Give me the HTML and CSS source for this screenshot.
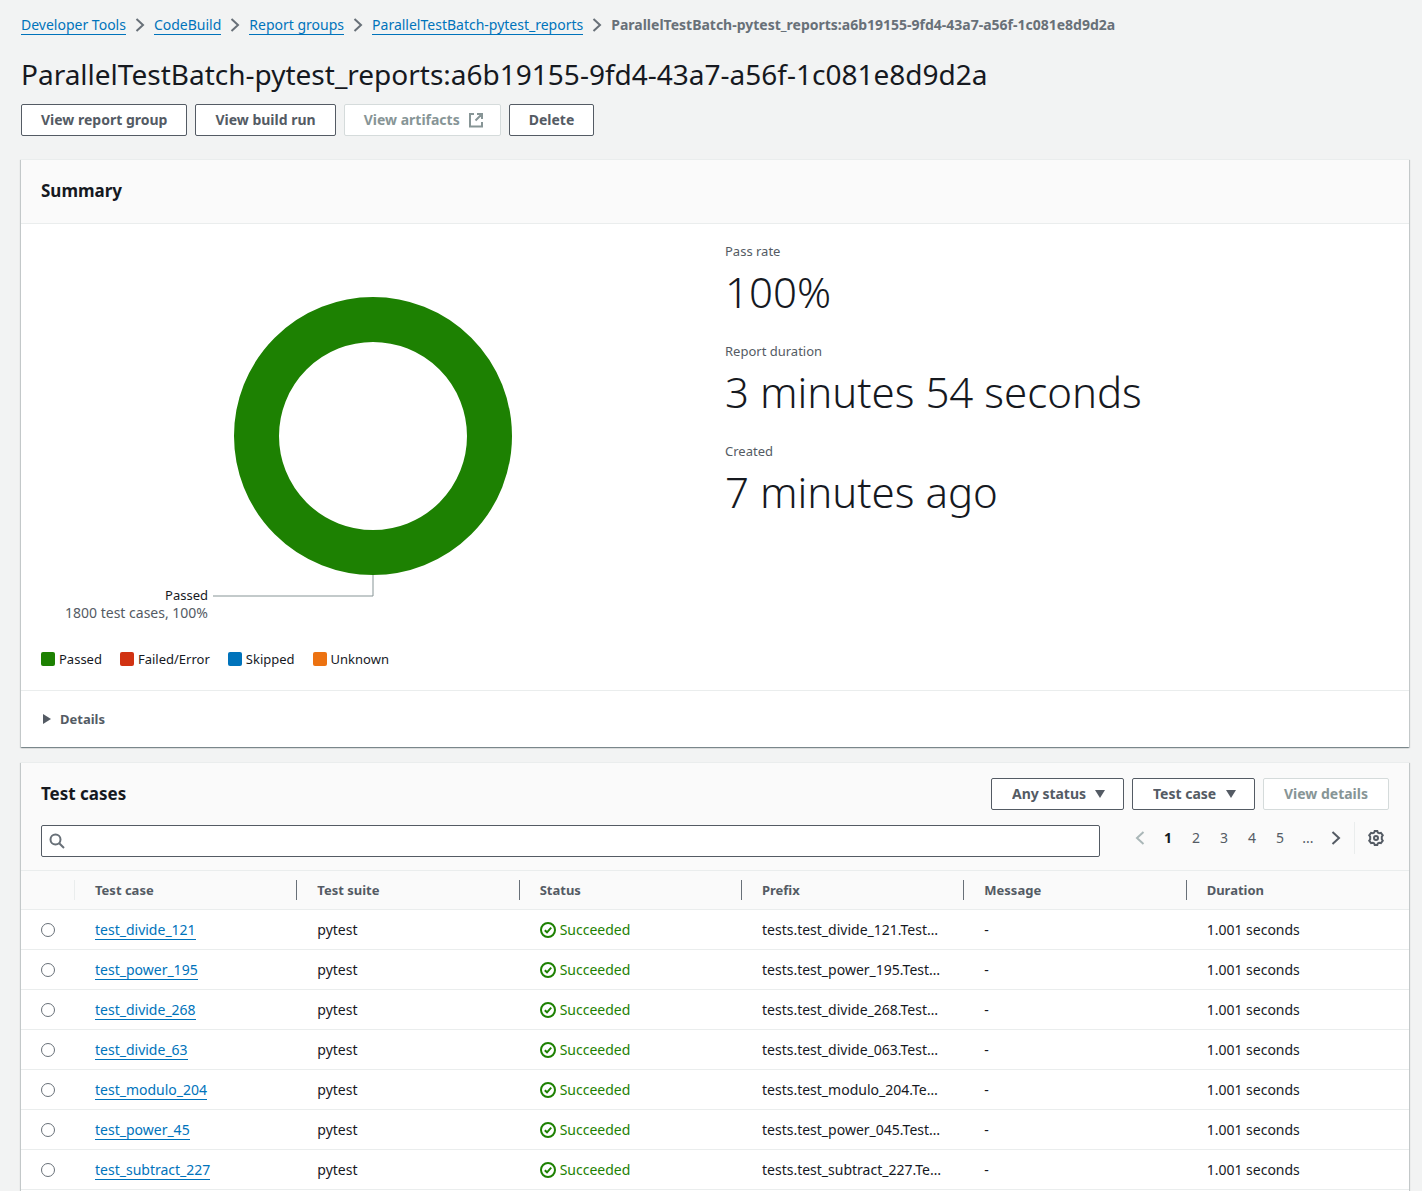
FILE: index.html
```html
<!DOCTYPE html>
<html lang="en">
<head>
<meta charset="utf-8">
<title>ParallelTestBatch-pytest_reports - CodeBuild</title>
<link rel="stylesheet" href="styles.css">
</head>
<body>
<svg class="sprite" aria-hidden="true">
  <symbol id="chevron" viewBox="0 0 16 16"><path d="M4.500 2l6.500 6-6.500 6"/></symbol>
  <symbol id="caret" viewBox="0 0 16 16"><path d="M3 4h10L8 12z"/></symbol>
  <symbol id="check" viewBox="0 0 16 16"><circle cx="8" cy="8" r="7"/><path d="M4.800 8.200l2.200 2.100 4.200-4.600"/></symbol>
</svg>
<main class="page">
  <nav class="breadcrumb" aria-label="Breadcrumb">
    <a href="#">Developer Tools</a>
    <svg class="icon"><use href="#chevron"/></svg>
    <a href="#">CodeBuild</a>
    <svg class="icon"><use href="#chevron"/></svg>
    <a href="#">Report groups</a>
    <svg class="icon"><use href="#chevron"/></svg>
    <a href="#">ParallelTestBatch-pytest_reports</a>
    <svg class="icon"><use href="#chevron"/></svg>
    <span class="current">ParallelTestBatch-pytest_reports:a6b19155-9fd4-43a7-a56f-1c081e8d9d2a</span>
  </nav>
  <h1>ParallelTestBatch-pytest_reports:a6b19155-9fd4-43a7-a56f-1c081e8d9d2a</h1>
  <div class="actions">
    <button class="btn" type="button">View report group</button>
    <button class="btn" type="button">View build run</button>
    <button class="btn external" type="button" disabled>View artifacts
      <svg class="icon" viewBox="0 0 16 16"><path d="M6 2H2v12.500h12V10M9 2h5v5M14 2L7.500 8.500"/></svg>
    </button>
    <button class="btn" type="button">Delete</button>
  </div>

  <section class="panel">
    <header class="panel-header"><h2>Summary</h2></header>
    <div class="summary">
      <div class="chart">
        <svg class="donut" viewBox="0 0 664 400" role="img" aria-label="Passed 1800 test cases, 100%">
          <circle class="ring" cx="332" cy="196" r="116.500"/>
          <path class="leader" d="M332 335v21H172"/>
          <text class="name" x="167" y="360">Passed</text>
          <text class="count" x="167" y="378">1800 test cases, 100%</text>
        </svg>
        <ul class="legend">
          <li><i class="swatch passed"></i>Passed</li>
          <li><i class="swatch failed"></i>Failed/Error</li>
          <li><i class="swatch skipped"></i>Skipped</li>
          <li><i class="swatch unknown"></i>Unknown</li>
        </ul>
      </div>
      <dl class="stats">
        <div><dt>Pass rate</dt><dd>100%</dd></div>
        <div><dt>Report duration</dt><dd>3 minutes 54 seconds</dd></div>
        <div><dt>Created</dt><dd>7 minutes ago</dd></div>
      </dl>
    </div>
    <details class="details">
      <summary><svg class="arrow" viewBox="0 0 12 12"><path d="M2 1v10l8-5z"/></svg>Details</summary>
    </details>
  </section>

  <section class="panel cases">
    <header class="cases-header">
      <div class="title-row">
        <h2>Test cases</h2>
        <div class="filters">
          <div class="dropdown status"><select aria-label="Status filter"><option>Any status</option></select><svg class="icon"><use href="#caret"/></svg></div>
          <div class="dropdown scope"><select aria-label="Search by"><option>Test case</option></select><svg class="icon"><use href="#caret"/></svg></div>
          <button class="btn" type="button" disabled>View details</button>
        </div>
      </div>
      <div class="search-row">
        <div class="search">
          <svg class="icon" viewBox="0 0 16 16"><circle cx="6.500" cy="6.500" r="5"/><path d="M10.200 10.200L15 15"/></svg>
          <input type="search" aria-label="Find test cases">
        </div>
        <div class="pager">
          <button type="button" disabled aria-label="Previous page"><svg class="icon flip"><use href="#chevron"/></svg></button>
          <button type="button" class="active">1</button>
          <button type="button">2</button>
          <button type="button">3</button>
          <button type="button">4</button>
          <button type="button">5</button>
          <span>...</span>
          <button type="button" aria-label="Next page"><svg class="icon"><use href="#chevron"/></svg></button>
        </div>
        <button class="settings" type="button" aria-label="Preferences">
          <svg class="icon" viewBox="0 0 16 16"><path d="M6.200 2.500L6.700 1h2.600l.5 1.500 1.400.8 1.700-.4 1.900 2.400-1 1.500v2.400l1 1.500-1.900 2.400-1.700-.4-1.400.8-.5 1.500H6.700l-.5-1.500-1.400-.8-1.700.4-1.900-2.400 1-1.500V6.800l-1-1.500 1.900-2.400 1.700.4z"/><circle cx="8" cy="8" r="2"/></svg>
        </button>
      </div>
    </header>
    <table>
      <thead>
        <tr>
          <th class="pick"><div>&nbsp;</div></th>
          <th><div>Test case</div></th>
          <th><div>Test suite</div></th>
          <th><div>Status</div></th>
          <th><div>Prefix</div></th>
          <th><div>Message</div></th>
          <th><div>Duration</div></th>
        </tr>
      </thead>
      <tbody>
        <tr><td class="pick"><input type="radio" name="case" aria-label="test_divide_121"></td><td><a href="#">test_divide_121</a></td><td>pytest</td><td><span class="ok"><svg class="icon"><use href="#check"/></svg>Succeeded</span></td><td>tests.test_divide_121.Test…</td><td>-</td><td>1.001 seconds</td></tr>
        <tr><td class="pick"><input type="radio" name="case" aria-label="test_power_195"></td><td><a href="#">test_power_195</a></td><td>pytest</td><td><span class="ok"><svg class="icon"><use href="#check"/></svg>Succeeded</span></td><td>tests.test_power_195.Test…</td><td>-</td><td>1.001 seconds</td></tr>
        <tr><td class="pick"><input type="radio" name="case" aria-label="test_divide_268"></td><td><a href="#">test_divide_268</a></td><td>pytest</td><td><span class="ok"><svg class="icon"><use href="#check"/></svg>Succeeded</span></td><td>tests.test_divide_268.Test…</td><td>-</td><td>1.001 seconds</td></tr>
        <tr><td class="pick"><input type="radio" name="case" aria-label="test_divide_63"></td><td><a href="#">test_divide_63</a></td><td>pytest</td><td><span class="ok"><svg class="icon"><use href="#check"/></svg>Succeeded</span></td><td>tests.test_divide_063.Test…</td><td>-</td><td>1.001 seconds</td></tr>
        <tr><td class="pick"><input type="radio" name="case" aria-label="test_modulo_204"></td><td><a href="#">test_modulo_204</a></td><td>pytest</td><td><span class="ok"><svg class="icon"><use href="#check"/></svg>Succeeded</span></td><td>tests.test_modulo_204.Te…</td><td>-</td><td>1.001 seconds</td></tr>
        <tr><td class="pick"><input type="radio" name="case" aria-label="test_power_45"></td><td><a href="#">test_power_45</a></td><td>pytest</td><td><span class="ok"><svg class="icon"><use href="#check"/></svg>Succeeded</span></td><td>tests.test_power_045.Test…</td><td>-</td><td>1.001 seconds</td></tr>
        <tr><td class="pick"><input type="radio" name="case" aria-label="test_subtract_227"></td><td><a href="#">test_subtract_227</a></td><td>pytest</td><td><span class="ok"><svg class="icon"><use href="#check"/></svg>Succeeded</span></td><td>tests.test_subtract_227.Te…</td><td>-</td><td>1.001 seconds</td></tr>
      </tbody>
    </table>
  </section>
</main>
</body>
</html>
```
FILE: styles.css
```css
* { box-sizing: border-box; }
body {
  margin: 0;
  background: #f2f3f3;
  color: #16191f;
  font: 14px/22px "Noto Sans", sans-serif;
}
button, input, select { font: inherit; color: inherit; }
a { color: #0073bb; text-decoration: none; border-bottom: 1px solid #0073bb; }
h1, h2, ul, dl, dd { margin: 0; padding: 0; }
h2 { font-size: 17px; line-height: 22px; font-weight: 700; }
.sprite { display: none; }
.icon {
  flex: none;
  width: 16px;
  height: 16px;
  fill: none;
  stroke: currentColor;
  stroke-width: 2;
}

.page {
  display: flex;
  flex-direction: column;
  min-height: 100vh;
  padding: 14px 13px 0 21px;
}
.breadcrumb { display: flex; align-items: center; gap: 6px; color: #687078; }
.breadcrumb a { line-height: 18px; }
.breadcrumb .current { font-weight: 700; }
h1 { margin-top: 20px; font-size: 28px; line-height: 36px; font-weight: 400; }

.actions { display: flex; gap: 8px; margin: 12px 0 23px; }
.btn, .dropdown select {
  height: 32px;
  padding: 0 20px;
  border: 1px solid #545b64;
  border-radius: 2px;
  background: #fff;
  color: #545b64;
  font-weight: 700;
}
.actions .btn { padding: 0 19px; }
.btn { display: flex; align-items: center; gap: 8px; }
.btn:disabled { border-color: #d5dbdb; color: #879596; }
.actions .external { padding-right: 16px; }

.panel {
  background: #fff;
  border-top: 1px solid #eaeded;
  box-shadow: 0 1px 1px rgba(0, 28, 36, .3), 1px 1px 1px rgba(0, 28, 36, .15), -1px 1px 1px rgba(0, 28, 36, .15);
}
.panel-header {
  padding: 20px 20px 21px;
  border-bottom: 1px solid #eaeded;
  background: #fafafa;
}
.summary {
  display: grid;
  grid-template-columns: 1fr 1fr;
  gap: 20px;
  padding: 16px 20px 20px;
}
.donut { display: block; width: 100%; max-height: 400px; margin-bottom: 8px; }
.ring { fill: none; stroke: #1d8102; stroke-width: 45; }
.leader { fill: none; stroke: #879596; stroke-width: 1; }
.donut text { text-anchor: end; fill: #16191f; }
.donut .count { fill: #545b64; }
.donut .name, .legend, .stats dt, .details, th { font-size: 13px; }
.legend { display: flex; flex-wrap: wrap; gap: 18px; list-style: none; }
.legend li { display: flex; align-items: center; gap: 4px; }
.swatch { width: 14px; height: 14px; border-radius: 2px; }
.passed { background: #1d8102; }
.failed { background: #d13212; }
.skipped { background: #0073bb; }
.unknown { background: #ec7211; }

.stats { display: flex; flex-direction: column; gap: 18px; }
.stats dt { color: #545b64; }
.stats dd { font: 300 42px/60px "Noto Sans", sans-serif; }

.details { border-top: 1px solid #eaeded; padding: 17px 20px; color: #545b64; font-weight: 700; }
.details summary { display: flex; align-items: center; gap: 7px; list-style: none; }
.arrow { width: 12px; height: 12px; fill: currentColor; }

.cases { flex: 1; margin-top: 15px; }
.cases-header { padding: 15px 20px 13px; background: #fafafa; border-bottom: 1px solid #eaeded; }
.title-row { display: flex; align-items: center; justify-content: space-between; }
.filters { display: flex; gap: 8px; }
.dropdown { display: grid; align-items: center; }
.dropdown select { grid-area: 1 / 1; width: 100%; appearance: none; }
.dropdown .icon {
  grid-area: 1 / 1;
  justify-self: end;
  margin-right: 16px;
  fill: #545b64;
  stroke: none;
  pointer-events: none;
}
.status { width: 133px; }
.scope { width: 123px; }

.search-row { display: flex; align-items: flex-start; margin-top: 15px; }
.search {
  display: flex;
  flex: 1;
  align-items: center;
  gap: 8px;
  height: 32px;
  padding: 0 7px;
  border: 1px solid #545b64;
  border-radius: 2px;
  background: #fff;
  color: #687078;
}
.search input { flex: 1; min-width: 0; border: 0; outline: 0; background: none; }
.pager { display: flex; margin: 2px 4px 0 26px; color: #545b64; }
.pager button, .pager span {
  display: flex;
  justify-content: center;
  align-items: center;
  width: 28px;
  height: 22px;
  padding: 0;
  border: 0;
  background: none;
}
.pager .active { color: #16191f; font-weight: 700; }
.pager button:disabled { color: #aab7b8; }
.flip { transform: scaleX(-1); }
.settings {
  display: flex;
  align-items: center;
  height: 32px;
  margin-top: -3px;
  padding: 0 5px 0 13px;
  border: 0;
  border-left: 1px solid #eaeded;
  background: none;
  color: #545b64;
}

table { width: 100%; border-collapse: collapse; table-layout: fixed; }
th { padding: 0; background: #fafafa; color: #545b64; text-align: left; }
th div { margin: 9px 0; padding: 0 20px; border-right: 1px solid #687078; line-height: 20px; }
th.pick div { border-color: #eaeded; }
th:last-child div { border: 0; }
.pick { width: 54px; }
tr { border-bottom: 1px solid #eaeded; }
td { height: 40px; padding: 0 20px; overflow: hidden; white-space: nowrap; text-overflow: ellipsis; }
td input { display: block; width: 14px; height: 14px; margin: 0; border: 1px solid #687078; border-radius: 50%; background: #fff; appearance: none; }
td input:checked { border: 4px solid #0073bb; }
.ok { display: flex; align-items: center; gap: 4px; color: #1d8102; }
```
